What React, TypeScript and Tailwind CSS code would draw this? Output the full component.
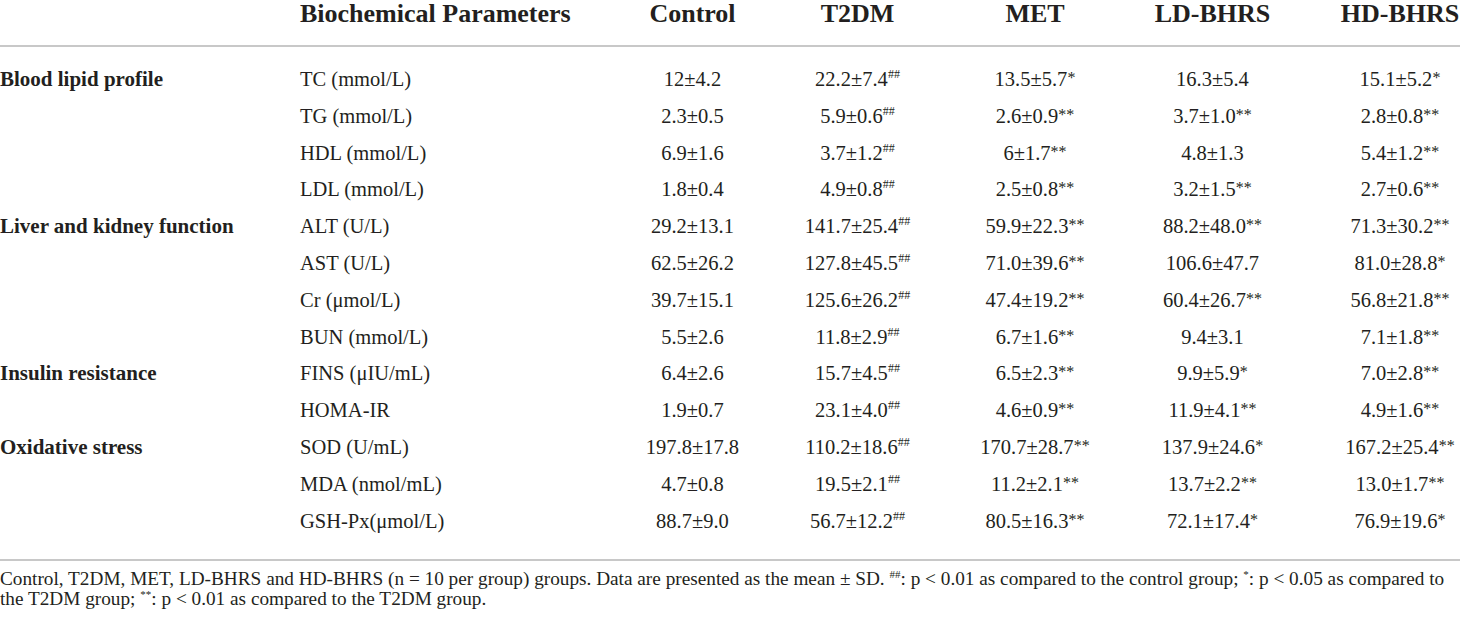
type Cell = [string, string?];

interface Row {
  param: string;
  values: Cell[];
}

interface Group {
  label: string;
  rows: Row[];
}

const groups: Group[] = [
  {
    label: "Blood lipid profile",
    rows: [
      { param: "TC (mmol/L)", values: [["12±4.2"], ["22.2±7.4", "##"], ["13.5±5.7", "*"], ["16.3±5.4"], ["15.1±5.2", "*"]] },
      { param: "TG (mmol/L)", values: [["2.3±0.5"], ["5.9±0.6", "##"], ["2.6±0.9", "**"], ["3.7±1.0", "**"], ["2.8±0.8", "**"]] },
      { param: "HDL (mmol/L)", values: [["6.9±1.6"], ["3.7±1.2", "##"], ["6±1.7", "**"], ["4.8±1.3"], ["5.4±1.2", "**"]] },
      { param: "LDL (mmol/L)", values: [["1.8±0.4"], ["4.9±0.8", "##"], ["2.5±0.8", "**"], ["3.2±1.5", "**"], ["2.7±0.6", "**"]] },
    ],
  },
  {
    label: "Liver and kidney function",
    rows: [
      { param: "ALT (U/L)", values: [["29.2±13.1"], ["141.7±25.4", "##"], ["59.9±22.3", "**"], ["88.2±48.0", "**"], ["71.3±30.2", "**"]] },
      { param: "AST (U/L)", values: [["62.5±26.2"], ["127.8±45.5", "##"], ["71.0±39.6", "**"], ["106.6±47.7"], ["81.0±28.8", "*"]] },
      { param: "Cr (μmol/L)", values: [["39.7±15.1"], ["125.6±26.2", "##"], ["47.4±19.2", "**"], ["60.4±26.7", "**"], ["56.8±21.8", "**"]] },
      { param: "BUN (mmol/L)", values: [["5.5±2.6"], ["11.8±2.9", "##"], ["6.7±1.6", "**"], ["9.4±3.1"], ["7.1±1.8", "**"]] },
    ],
  },
  {
    label: "Insulin resistance",
    rows: [
      { param: "FINS (μIU/mL)", values: [["6.4±2.6"], ["15.7±4.5", "##"], ["6.5±2.3", "**"], ["9.9±5.9", "*"], ["7.0±2.8", "**"]] },
      { param: "HOMA-IR", values: [["1.9±0.7"], ["23.1±4.0", "##"], ["4.6±0.9", "**"], ["11.9±4.1", "**"], ["4.9±1.6", "**"]] },
    ],
  },
  {
    label: "Oxidative stress",
    rows: [
      { param: "SOD (U/mL)", values: [["197.8±17.8"], ["110.2±18.6", "##"], ["170.7±28.7", "**"], ["137.9±24.6", "*"], ["167.2±25.4", "**"]] },
      { param: "MDA (nmol/mL)", values: [["4.7±0.8"], ["19.5±2.1", "##"], ["11.2±2.1", "**"], ["13.7±2.2", "**"], ["13.0±1.7", "**"]] },
      { param: "GSH-Px(μmol/L)", values: [["88.7±9.0"], ["56.7±12.2", "##"], ["80.5±16.3", "**"], ["72.1±17.4", "*"], ["76.9±19.6", "*"]] },
    ],
  },
];

const columns = ["Control", "T2DM", "MET", "LD-BHRS", "HD-BHRS"];

const gridCols = "grid grid-cols-[300px_320px_145px_185px_170px_185px_155px]";

function Mark({ mark }: { mark?: string }) {
  if (!mark) return null;
  if (mark === "##") {
    return <span className="text-[12px] leading-none align-[8px]">##</span>;
  }
  return <span className="text-[16px] leading-none align-[3px]">{mark}</span>;
}

function ValueCell({ cell, last }: { cell: Cell; last: boolean }) {
  return (
    <div className={`flex items-center justify-center ${last ? "pl-[35px]" : ""}`}>
      <span className="whitespace-nowrap">
        {cell[0]}
        <Mark mark={cell[1]} />
      </span>
    </div>
  );
}

export default function App() {
  return (
    <div className="w-[1460px] h-[620px] overflow-hidden bg-white text-[#231f20] font-['Liberation_Serif',serif]">
      {/* Column headers */}
      <div className={`${gridCols} h-[47px] border-b-2 border-[#c8c8c8] text-[26px] leading-[28px] font-bold`}>
        <div />
        <div className="whitespace-nowrap">Biochemical Parameters</div>
        {columns.map((c, i) => (
          <div key={c} className={`text-center whitespace-nowrap ${i === 4 ? "pl-[35px]" : ""}`}>
            {c}
          </div>
        ))}
      </div>

      {/* Body */}
      <div className="pt-[14px] pb-[20px] border-b-2 border-[#c8c8c8] text-[20.5px]">
        {groups.map((g) =>
          g.rows.map((r, ri) => (
            <div key={r.param} className={`${gridCols} h-[36.8px]`}>
              <div className="flex items-center font-bold text-[21px] whitespace-nowrap">
                {ri === 0 ? g.label : ""}
              </div>
              <div className="flex items-center whitespace-nowrap">{r.param}</div>
              {r.values.map((v, vi) => (
                <ValueCell key={vi} cell={v} last={vi === 4} />
              ))}
            </div>
          ))
        )}
      </div>

      {/* Footnote */}
      <p className="pt-[8px] text-[19.25px] leading-[20px]">
        Control, T2DM, MET, LD-BHRS and HD-BHRS (n = 10 per group) groups. Data are presented as the mean ± SD.{" "}
        <span className="text-[11px] leading-none align-[7px]">##</span>: p &lt; 0.01 as compared to the control group;{" "}
        <span className="text-[11px] leading-none align-[7px]">*</span>: p &lt; 0.05 as compared to the T2DM group;{" "}
        <span className="text-[11px] leading-none align-[7px]">**</span>: p &lt; 0.01 as compared to the T2DM group.
      </p>
    </div>
  );
}
